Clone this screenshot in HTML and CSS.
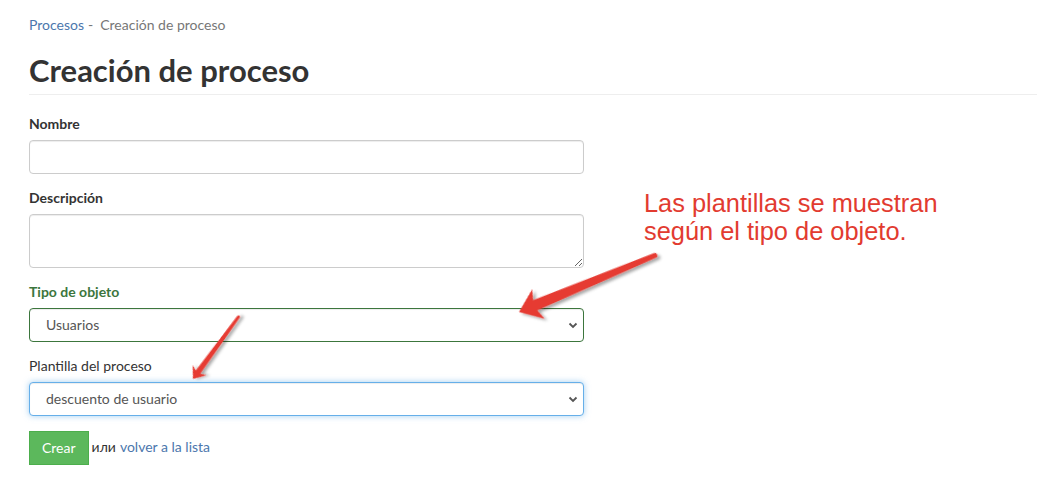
FILE: index.html
```html
<!DOCTYPE html>
<html lang="es">
<head>
<meta charset="utf-8">
<title>Creación de proceso</title>
<link rel="stylesheet" href="styles.css">
</head>
<body>
<div class="page">
  <div class="breadcrumb"><a href="#" class="crumb-link">Procesos</a><span class="crumb-sep">-</span><span class="crumb-current">Creación de proceso</span></div>
  <h1 class="page-header">Creación de proceso</h1>
  <form class="form">
    <div class="form-group">
      <label class="label">Nombre</label>
      <input class="control" type="text">
    </div>
    <div class="form-group">
      <label class="label">Descripción</label>
      <textarea class="control textarea"></textarea>
    </div>
    <div class="form-group has-success">
      <label class="label">Tipo de objeto</label>
      <div class="select-wrap">
        <select class="control select select-success"><option>Usuarios</option></select>
        <svg class="chevron" width="10" height="7" viewBox="0 0 10 7"><path d="M1.5 1.5 L5 5 L8.5 1.5" fill="none" stroke="#555" stroke-width="1.8"/></svg>
      </div>
    </div>
    <div class="form-group">
      <label class="label label-normal">Plantilla del proceso</label>
      <div class="select-wrap">
        <select class="control select select-focus"><option>descuento de usuario</option></select>
        <svg class="chevron" width="10" height="7" viewBox="0 0 10 7"><path d="M1.5 1.5 L5 5 L8.5 1.5" fill="none" stroke="#555" stroke-width="1.8"/></svg>
      </div>
    </div>
    <div class="actions">
      <button type="button" class="btn">Crear</button>
      <span class="or">или</span>
      <a href="#" class="back-link">volver a la lista</a>
    </div>
  </form>

  <div class="note">Las plantillas se muestran<br>según el tipo de objeto.</div>

  <svg class="arrows" width="1037" height="482" viewBox="0 0 1037 482">
    <defs>
      <filter id="sh" x="-20%" y="-20%" width="140%" height="160%">
        <feDropShadow dx="2" dy="3" stdDeviation="1.6" flood-color="#000" flood-opacity="0.35"/>
      </filter>
    </defs>
    <g transform="translate(519 312) rotate(-22.6)" filter="url(#sh)">
      <path d="M0 0 L21 -16 L17.5 -5.5 L147 -2.6 A2.6 2.6 0 0 1 147 2.6 L17.5 5.5 L21 16 Z" fill="#e63b33"/>
    </g>
    <g transform="translate(193 379) rotate(-53.8)" filter="url(#sh)">
      <path d="M0 0 L11 -8.5 L8.5 -2.8 L77 -1.5 A1.5 1.5 0 0 1 77 1.5 L8.5 2.8 L11 8.5 Z" fill="#e63b33"/>
    </g>
  </svg>
</div>
</body>
</html>
```

FILE: styles.css
```css
* { box-sizing: border-box; }
html, body { margin: 0; padding: 0; background: #fff; }
body {
  font-family: Lato, "Open Sans", Arial, sans-serif;
  font-size: 14px;
  line-height: 1.42857;
  color: #333;
}
.page {
  position: relative;
  width: 1037px;
  height: 482px;
  overflow: hidden;
  padding: 15px 0 0 29px;
}
.breadcrumb {
  display: flex;
  align-items: center;
  height: 20px;
  font-size: 14px;
}
.crumb-link { color: #4c77ad; text-decoration: none; }
.crumb-sep { color: #777; margin: 0 7px 0 4px; }
.crumb-current { color: #777; }
.page-header {
  margin: 18px 0 20px;
  padding-bottom: 7px;
  border-bottom: 1px solid #eee;
  font-size: 31px;
  font-weight: 700;
  line-height: 1.1;
  color: #333;
}
.form { width: 555px; }
.form-group { margin-bottom: 15px; display: flex; flex-direction: column; }
.label {
  display: block;
  margin-bottom: 5px;
  padding-bottom: 2px;
  font-weight: 700;
  font-size: 14px;
  line-height: 18px;
  color: #333;
}
.has-success .label { color: #3c763d; }
.label-normal { font-weight: 400; }
.control {
  display: block;
  width: 100%;
  height: 34px;
  padding: 5px 12px 7px;
  font-family: inherit;
  font-size: 14px;
  color: #555;
  background: #fff;
  border: 1px solid #ccc;
  border-radius: 4px;
  box-shadow: inset 0 1px 1px rgba(0,0,0,0.075);
  outline: none;
}
.textarea { height: 54px; resize: vertical; }
.select-wrap { position: relative; }
.select {
  -webkit-appearance: none;
  appearance: none;
  padding-left: 16px;
}
.select-success { border-color: #3c763d; }
.select-focus {
  border-color: #66afe9;
  box-shadow: inset 0 1px 1px rgba(0,0,0,0.075), 0 0 6px rgba(102,175,233,0.6);
}
.chevron { position: absolute; right: 6px; top: 14px; }
.actions { display: flex; align-items: center; }
.btn {
  height: 34px;
  padding: 5px 12px 7px;
  font-family: inherit;
  font-size: 14px;
  color: #fff;
  background: #5cb85c;
  border: 1px solid #4cae4c;
  border-radius: 0;
}
.or { margin-left: 3px; margin-bottom: 2px; color: #333; }
.back-link { margin-left: 4px; margin-bottom: 2px; color: #4c77ad; text-decoration: none; }
.note {
  position: absolute;
  left: 644px;
  top: 189px;
  font-family: "Liberation Sans", Arial, sans-serif;
  font-size: 25.4px;
  line-height: 28px;
  color: #e23b30;
}
.arrows { position: absolute; left: 0; top: 0; pointer-events: none; }
```
